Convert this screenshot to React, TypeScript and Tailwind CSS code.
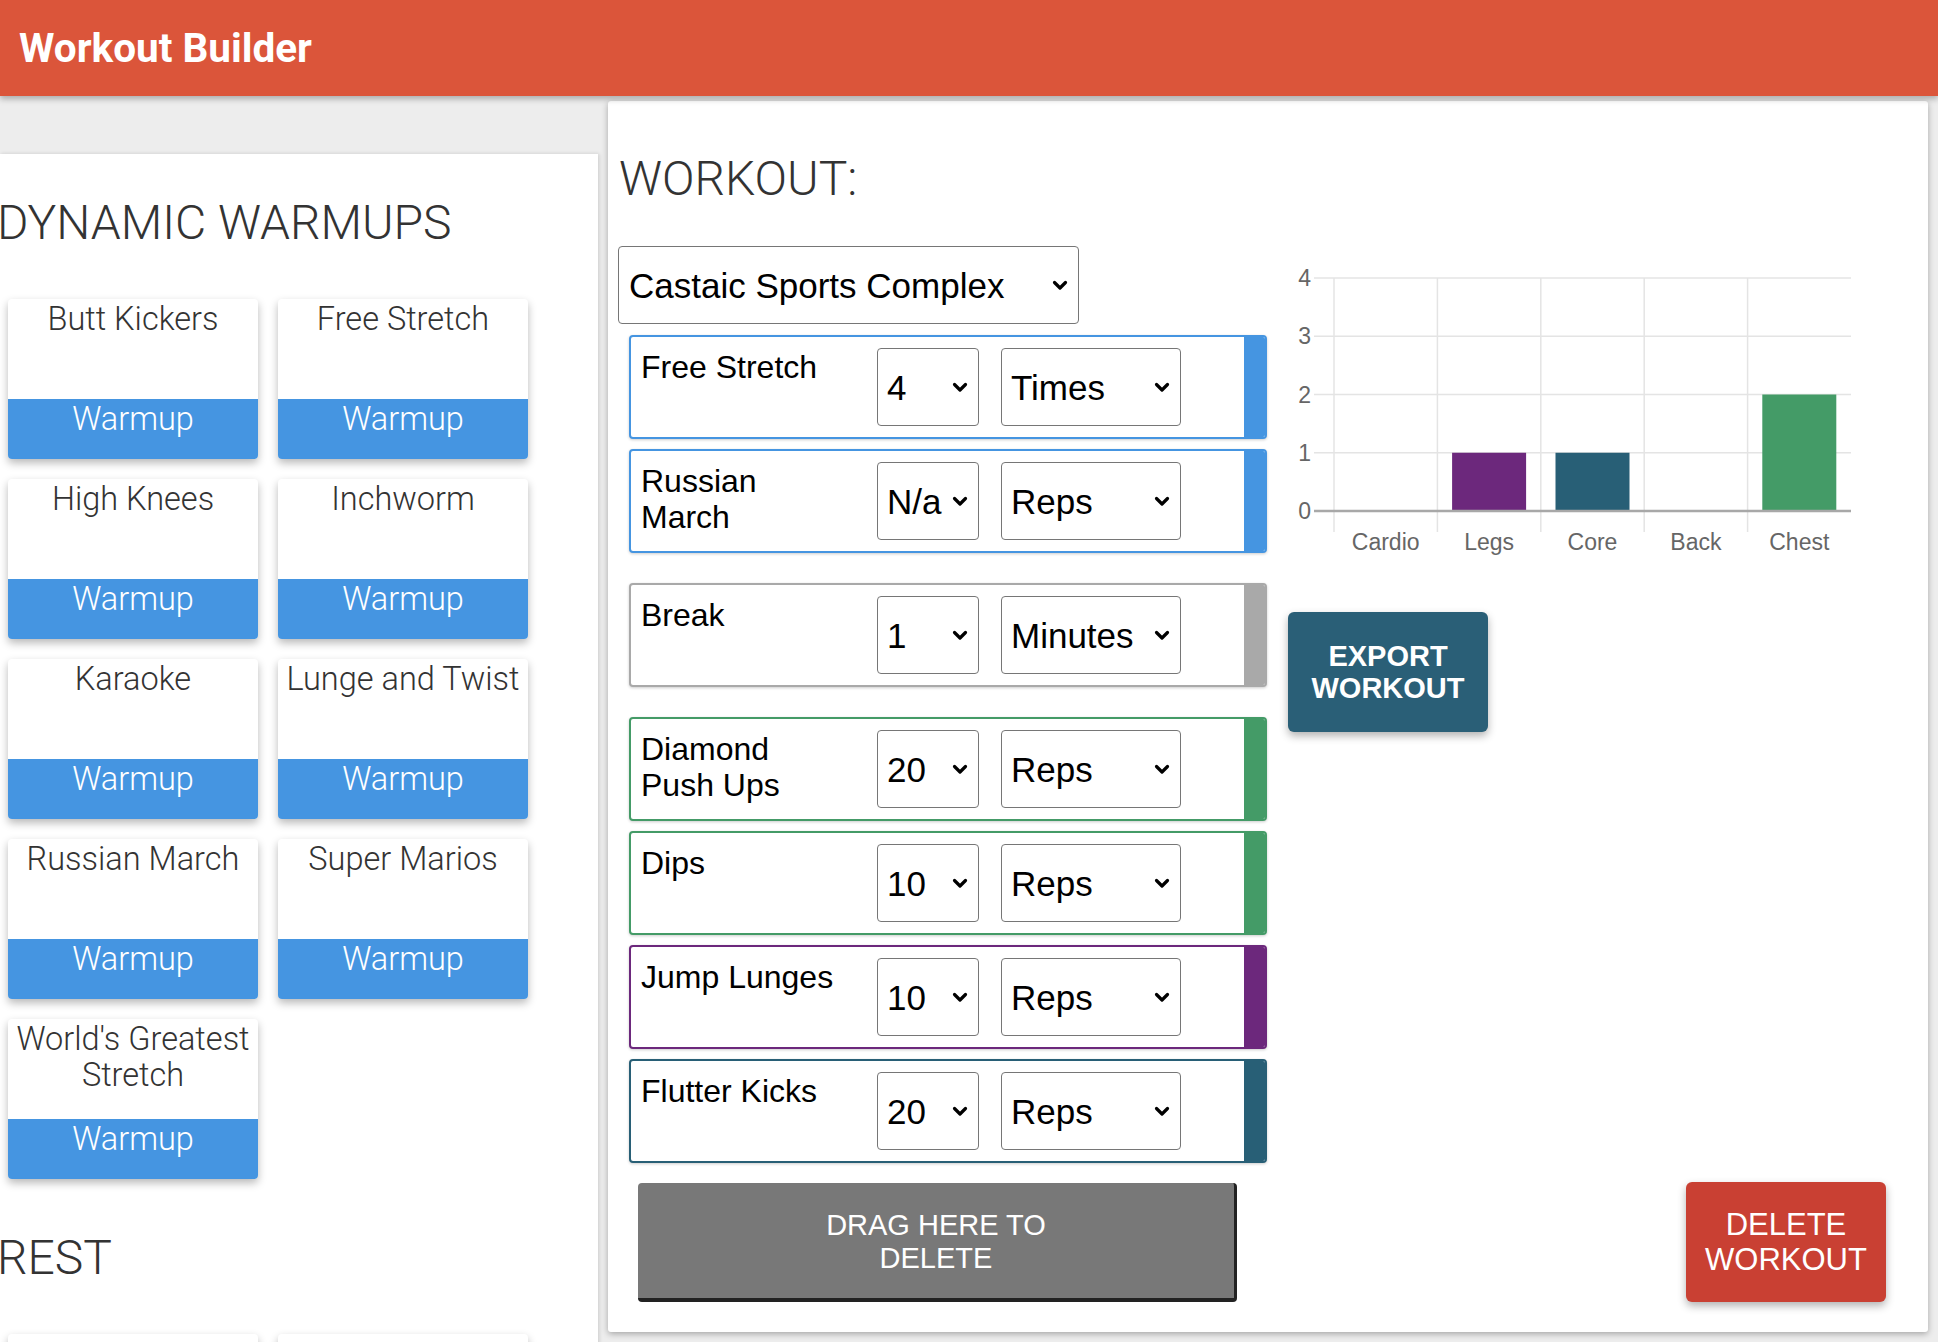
import React from "react";

const Chevron = () => (
  <svg width="16" height="11" viewBox="0 0 16 11" className="shrink-0">
    <path d="M2.5 2.5 L8 8 L13.5 2.5" fill="none" stroke="#000" strokeWidth="3.2" strokeLinecap="round" strokeLinejoin="round" />
  </svg>
);

function FakeSelect({ value, widthClass }: { value: string; widthClass: string }) {
  return (
    <div className={`flex h-[78px] shrink-0 items-center justify-between rounded-[4px] border border-[#767676] bg-white pl-[9px] pr-[10px] ${widthClass}`}>
      <span className="text-[35px] leading-none text-black">{value}</span>
      <Chevron />
    </div>
  );
}

type Row = { name: string; qty: string; unit: string; border: string; stripe: string; extra?: string };

const rows: Row[] = [
  { name: "Free Stretch", qty: "4", unit: "Times", border: "border-[#4595e1]", stripe: "bg-[#4595e1]" },
  { name: "Russian March", qty: "N/a", unit: "Reps", border: "border-[#4595e1]", stripe: "bg-[#4595e1]" },
  { name: "Break", qty: "1", unit: "Minutes", border: "border-[#a9a9a9]", stripe: "bg-[#a9a9a9]", extra: "my-[20px]" },
  { name: "Diamond Push Ups", qty: "20", unit: "Reps", border: "border-[#449b67]", stripe: "bg-[#449b67]" },
  { name: "Dips", qty: "10", unit: "Reps", border: "border-[#449b67]", stripe: "bg-[#449b67]" },
  { name: "Jump Lunges", qty: "10", unit: "Reps", border: "border-[#6c287c]", stripe: "bg-[#6c287c]" },
  { name: "Flutter Kicks", qty: "20", unit: "Reps", border: "border-[#285f76]", stripe: "bg-[#285f76]" },
];

const warmups = [
  "Butt Kickers",
  "Free Stretch",
  "High Knees",
  "Inchworm",
  "Karaoke",
  "Lunge and Twist",
  "Russian March",
  "Super Marios",
  "World's Greatest Stretch",
];

function Card({ title, tag }: { title: string; tag: string }) {
  return (
    <div className="flex h-[160px] w-[250px] flex-col overflow-hidden rounded-[4px] bg-white shadow-[0_4px_8px_rgba(0,0,0,0.28)]">
      <div className="h-[100px] pt-[2px] text-center text-[32.5px] font-light leading-[36px] text-[#333]">{title}</div>
      <div className="h-[60px] bg-[#4595e1] pt-[2px] text-center text-[32.5px] font-light leading-[36px] text-white">{tag}</div>
    </div>
  );
}

function Chart() {
  const cats = ["Cardio", "Legs", "Core", "Back", "Chest"];
  const vals = [0, 1, 1, 0, 2];
  const colors = ["#000", "#6c287c", "#285f76", "#000", "#449b67"];
  const x0 = 46;
  const cw = 103.4;
  const y0 = 256;
  const u = 58.25;
  return (
    <svg width="572" height="305" viewBox="0 0 572 305" className="shrink-0 font-['Liberation_Sans',Arial,sans-serif]">
      {[1, 2, 3, 4].map((v) => (
        <line key={v} x1={26} x2={563} y1={y0 - v * u} y2={y0 - v * u} stroke="#e4e4e4" strokeWidth={1.5} />
      ))}
      {[0, 1, 2, 3, 4].map((i) => (
        <line key={i} x1={x0 + i * cw} x2={x0 + i * cw} y1={y0 - 4 * u} y2={277} stroke="#e4e4e4" strokeWidth={1.5} />
      ))}
      {vals.map((v, i) =>
        v > 0 ? <rect key={i} x={x0 + (i + 0.5) * cw - 37} y={y0 - v * u} width={74} height={v * u} fill={colors[i]} /> : null
      )}
      <line x1={26} x2={563} y1={y0} y2={y0} stroke="#a8a8a8" strokeWidth={2.5} />
      {[0, 1, 2, 3, 4].map((v) => (
        <text key={v} x={23} y={y0 - v * u + 8} textAnchor="end" fontSize="23" fill="#666">
          {v}
        </text>
      ))}
      {cats.map((c, i) => (
        <text key={c} x={x0 + (i + 0.5) * cw} y={295} textAnchor="middle" fontSize="23" fill="#666">
          {c}
        </text>
      ))}
    </svg>
  );
}

export default function App() {
  return (
    <div className="relative h-[1342px] w-[1938px] overflow-hidden bg-[#ededed] font-['Roboto',sans-serif]">
      <header className="relative z-10 flex h-[96px] items-center bg-[#db553a] pl-[19px] shadow-[0_3px_6px_rgba(0,0,0,0.28)]">
        <h1 className="text-[40.5px] font-bold leading-none text-white">Workout Builder</h1>
      </header>
      <div className="flex items-start">
        <aside className="mt-[58px] w-[598px] shrink-0 bg-white pt-[41px] pb-[40px] shadow-[1px_0_4px_rgba(0,0,0,0.15)]">
          <h2 className="ml-[-3px] text-[48px] font-light leading-[56px] text-[#333]">DYNAMIC WARMUPS</h2>
          <div className="mt-[48px] grid grid-cols-[250px_250px] gap-[20px] pl-[8px]">
            {warmups.map((w) => (
              <Card key={w} title={w} tag="Warmup" />
            ))}
          </div>
          <h2 className="ml-[-3px] mt-[51px] text-[48px] font-light leading-[56px] text-[#333]">REST</h2>
          <div className="mt-[48px] grid grid-cols-[250px_250px] gap-[20px] pl-[8px]">
            <div className="h-[160px] w-[250px] rounded-[4px] bg-white shadow-[0_4px_8px_rgba(0,0,0,0.28)]" />
            <div className="h-[160px] w-[250px] rounded-[4px] bg-white shadow-[0_4px_8px_rgba(0,0,0,0.28)]" />
          </div>
        </aside>
        <main className="ml-[10px] mt-[5px] flex h-[1231px] w-[1320px] shrink-0 rounded-[3px] bg-white pb-[30px] pr-[42px] shadow-[0_2px_6px_rgba(0,0,0,0.3)]">
          <section className="flex w-[680px] shrink-0 flex-col pl-[10px] pt-[50px] font-['Liberation_Sans',Arial,sans-serif]">
            <h2 className="ml-[1px] font-['Roboto',sans-serif] text-[48px] font-light leading-[56px] text-[#333]">WORKOUT:</h2>
            <div className="mt-[39px] flex h-[78px] w-[461px] items-center justify-between rounded-[4px] border border-[#767676] bg-white pl-[10px] pr-[10px]">
              <span className="text-[35px] leading-none text-black">Castaic Sports Complex</span>
              <Chevron />
            </div>
            <div className="ml-[11px] mt-[11px] flex flex-col gap-[10px]">
              {rows.map((r) => (
                <div
                  key={r.name}
                  className={`flex h-[104px] w-[638px] overflow-hidden rounded-[4px] border-2 bg-white shadow-[0_1px_3px_rgba(0,0,0,0.2)] ${r.border} ${r.extra ?? ""}`}
                >
                  <div className="flex flex-1 items-center">
                    <div className="w-[246px] self-start pl-[10px] pt-[12px]">
                      <div className="w-[200px] text-[32px] leading-[36px] text-black">{r.name}</div>
                    </div>
                    <FakeSelect value={r.qty} widthClass="w-[102px]" />
                    <div className="ml-[22px]">
                      <FakeSelect value={r.unit} widthClass="w-[180px]" />
                    </div>
                  </div>
                  <div className={`w-[21px] shrink-0 ${r.stripe}`} />
                </div>
              ))}
            </div>
            <div className="ml-[20px] mt-[20px] flex h-[119px] w-[599px] items-center justify-center rounded-[4px] border-b-[4px] border-r-[3px] border-[#222] bg-[#787878] pt-[3px] text-center text-[29px] leading-[33px] text-white">
              <span>
                DRAG HERE TO
                <br />
                DELETE
              </span>
            </div>
          </section>
          <section className="flex flex-1 flex-col pt-[154px]">
            <Chart />
            <button className="mt-[52px] flex h-[120px] w-[200px] items-center justify-center rounded-[6px] bg-[#2a5f77] font-['Liberation_Sans',Arial,sans-serif] text-[29px] font-bold leading-[32px] text-white shadow-[0_4px_8px_rgba(0,0,0,0.3)]">
              <span>
                EXPORT
                <br />
                WORKOUT
              </span>
            </button>
            <button className="mt-auto flex h-[120px] w-[200px] items-center justify-center self-end rounded-[6px] bg-[#c94033] font-['Liberation_Sans',Arial,sans-serif] text-[31px] leading-[35px] text-white shadow-[0_4px_8px_rgba(0,0,0,0.3)]">
              <span>
                DELETE
                <br />
                WORKOUT
              </span>
            </button>
          </section>
        </main>
      </div>
    </div>
  );
}
